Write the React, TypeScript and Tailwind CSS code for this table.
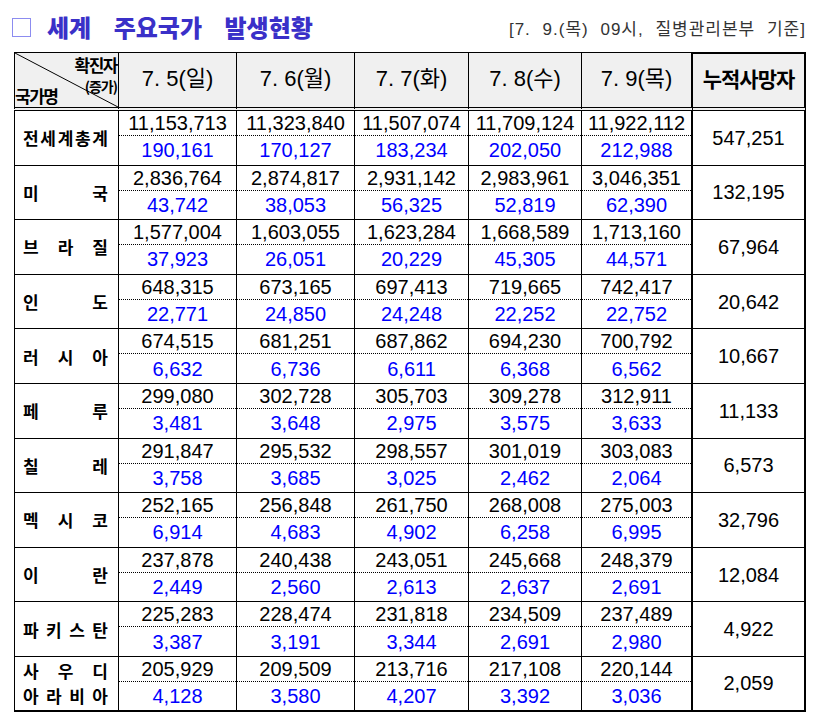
import React from 'react';

type Row = {
  name: string[][];
  vals: [string, string][];
  death: string;
};

const rows: Row[] = [
  {
    name: [['전', '세', '계', '총', '계']],
    vals: [['11,153,713', '190,161'], ['11,323,840', '170,127'], ['11,507,074', '183,234'], ['11,709,124', '202,050'], ['11,922,112', '212,988']],
    death: '547,251',
  },
  {
    name: [['미', '국']],
    vals: [['2,836,764', '43,742'], ['2,874,817', '38,053'], ['2,931,142', '56,325'], ['2,983,961', '52,819'], ['3,046,351', '62,390']],
    death: '132,195',
  },
  {
    name: [['브', '라', '질']],
    vals: [['1,577,004', '37,923'], ['1,603,055', '26,051'], ['1,623,284', '20,229'], ['1,668,589', '45,305'], ['1,713,160', '44,571']],
    death: '67,964',
  },
  {
    name: [['인', '도']],
    vals: [['648,315', '22,771'], ['673,165', '24,850'], ['697,413', '24,248'], ['719,665', '22,252'], ['742,417', '22,752']],
    death: '20,642',
  },
  {
    name: [['러', '시', '아']],
    vals: [['674,515', '6,632'], ['681,251', '6,736'], ['687,862', '6,611'], ['694,230', '6,368'], ['700,792', '6,562']],
    death: '10,667',
  },
  {
    name: [['페', '루']],
    vals: [['299,080', '3,481'], ['302,728', '3,648'], ['305,703', '2,975'], ['309,278', '3,575'], ['312,911', '3,633']],
    death: '11,133',
  },
  {
    name: [['칠', '레']],
    vals: [['291,847', '3,758'], ['295,532', '3,685'], ['298,557', '3,025'], ['301,019', '2,462'], ['303,083', '2,064']],
    death: '6,573',
  },
  {
    name: [['멕', '시', '코']],
    vals: [['252,165', '6,914'], ['256,848', '4,683'], ['261,750', '4,902'], ['268,008', '6,258'], ['275,003', '6,995']],
    death: '32,796',
  },
  {
    name: [['이', '란']],
    vals: [['237,878', '2,449'], ['240,438', '2,560'], ['243,051', '2,613'], ['245,668', '2,637'], ['248,379', '2,691']],
    death: '12,084',
  },
  {
    name: [['파', '키', '스', '탄']],
    vals: [['225,283', '3,387'], ['228,474', '3,191'], ['231,818', '3,344'], ['234,509', '2,691'], ['237,489', '2,980']],
    death: '4,922',
  },
  {
    name: [['사', '우', '디'], ['아', '라', '비', '아']],
    vals: [['205,929', '4,128'], ['209,509', '3,580'], ['213,716', '4,207'], ['217,108', '3,392'], ['220,144', '3,036']],
    death: '2,059',
  },
];

const dates = ['7. 5(일)', '7. 6(월)', '7. 7(화)', '7. 8(수)', '7. 9(목)'];

const font = "font-['Liberation_Sans','Noto_Sans_CJK_KR',sans-serif]";

export default function App() {
  return (
    <div className={`w-[821px] h-[725px] bg-white relative ${font} text-black`}>
      {/* title bar */}
      <div className="flex items-end justify-between pl-[12px] pr-[15px] pt-[10px] h-[42px]">
        <div className="flex items-center">
          <div className="w-[19px] h-[19px] border border-[#8c8cf0] mr-[16px]" />
          <span className="font-['Noto_Sans_CJK_KR',sans-serif] font-black text-[24px] leading-[30px] text-[#3a30c8] [word-spacing:17px]">
            세계 주요국가 발생현황
          </span>
        </div>
        <span className="text-[17px] leading-[20px] text-[#333] mb-[2px] tracking-[1px] [word-spacing:6px]">
          [7. 9.(목) 09시, 질병관리본부 기준]
        </span>
      </div>

      {/* table */}
      <div className="ml-[14px] mt-[10px] w-[792px] grid grid-cols-[105px_118px_118px_114px_113px_111px_113px] grid-rows-[59px_repeat(11,54.6px)]">
        {/* header */}
        <div className="relative border-l border-t border-r border-b-4 border-double border-black bg-[#f0f0f0] font-['Noto_Sans_CJK_KR',sans-serif] font-bold">
          <svg className="absolute inset-0 w-full h-full" preserveAspectRatio="none" viewBox="0 0 100 100">
            <line x1="0" y1="0" x2="100" y2="100" stroke="black" strokeWidth="1" vectorEffect="non-scaling-stroke" />
          </svg>
          <div className="absolute right-[1px] top-[2px] text-[17px] leading-[20px] tracking-[-1.5px]">확진자</div>
          <div className="absolute right-[1px] top-[24px] text-[14px] leading-[18px] tracking-[-1px]">(증가)</div>
          <div className="absolute left-0 bottom-[0px] text-[17px] leading-[22px] tracking-[-1.5px]">국가명</div>
        </div>
        {dates.map((d, i) => (
          <div
            key={d}
            className={`flex items-center justify-center pb-[4px] border-t border-b-4 border-double border-black bg-[#f0f0f0] text-[22px] ${
              i === 4 ? 'border-r-2 border-r-solid' : 'border-r'
            }`}
          >
            {d}
          </div>
        ))}
        <div className="flex items-center justify-center pb-[4px] border-t-2 border-r-2 border-b-4 border-double border-black bg-[#f0f0f0] font-['Noto_Sans_CJK_KR',sans-serif] font-bold text-[21px] tracking-[-1px]">
          누적사망자
        </div>

        {/* data rows */}
        {rows.map((r, ri) => {
          const last = ri === rows.length - 1;
          const bb = last ? 'border-b-2' : 'border-b';
          return (
            <React.Fragment key={ri}>
              <div className={`flex flex-col justify-center gap-[6px] pl-[8px] pr-[10px] border-l border-r border-black ${bb} font-['Noto_Sans_CJK_KR',sans-serif] font-bold text-[17px] leading-[19px]`}>
                {r.name.map((line, li) => (
                  <div key={li} className="flex justify-between">
                    {line.map((c, ci) => (
                      <span key={ci}>{c}</span>
                    ))}
                  </div>
                ))}
              </div>
              {r.vals.map((v, vi) => (
                <div
                  key={vi}
                  className={`flex flex-col border-black ${bb} ${vi === 4 ? 'border-r-2' : 'border-r'} text-[20px] leading-[22px]`}
                >
                  <div className="h-[25px] flex items-center justify-center border-b border-dotted border-black">
                    {v[0]}
                  </div>
                  <div className="flex-1 flex items-center justify-center text-[#0000ff]">{v[1]}</div>
                </div>
              ))}
              <div className={`flex items-center justify-center border-r-2 border-black ${bb} text-[20px]`}>
                {r.death}
              </div>
            </React.Fragment>
          );
        })}
      </div>
    </div>
  );
}
